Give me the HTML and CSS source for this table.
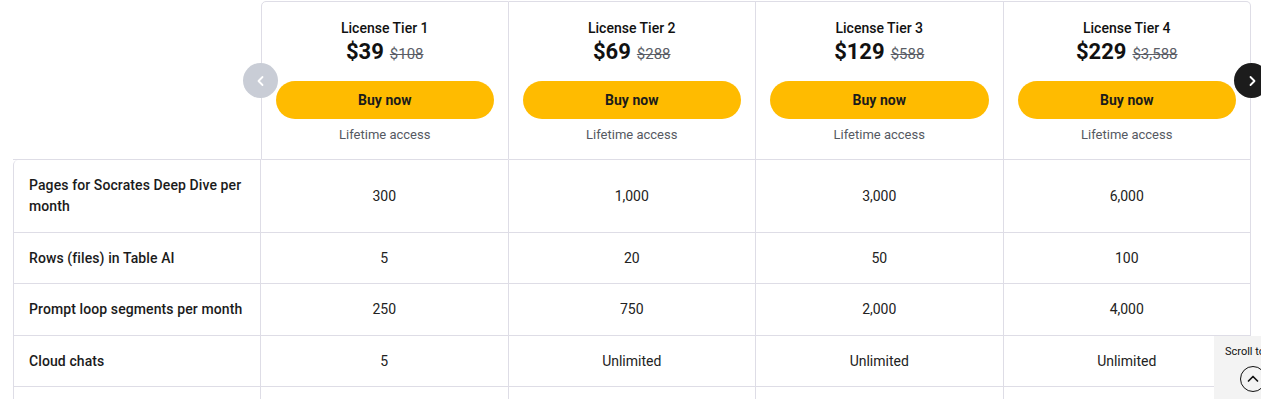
FILE: index.html
```html
<!DOCTYPE html>
<html>
<head>
<meta charset="utf-8">
<link rel="stylesheet" href="styles.css">
</head>
<body>
<div class="wrap">
  <div class="grid">
    <div class="corner"></div>
    <div class="head first-head">
      <div class="tier">License Tier 1</div>
      <div class="price"><span class="now">$39</span><span class="was">$108</span></div>
      <button class="buy">Buy now</button>
      <div class="life">Lifetime access</div>
    </div>
    <div class="head">
      <div class="tier">License Tier 2</div>
      <div class="price"><span class="now">$69</span><span class="was">$288</span></div>
      <button class="buy">Buy now</button>
      <div class="life">Lifetime access</div>
    </div>
    <div class="head">
      <div class="tier">License Tier 3</div>
      <div class="price"><span class="now">$129</span><span class="was">$588</span></div>
      <button class="buy">Buy now</button>
      <div class="life">Lifetime access</div>
    </div>
    <div class="head last-head">
      <div class="tier">License Tier 4</div>
      <div class="price"><span class="now">$229</span><span class="was">$3,588</span></div>
      <button class="buy">Buy now</button>
      <div class="life">Lifetime access</div>
    </div>

    <div class="label first-label">Pages for Socrates Deep Dive per month</div>
    <div class="val">300</div><div class="val">1,000</div><div class="val">3,000</div><div class="val">6,000</div>

    <div class="label">Rows (files) in Table AI</div>
    <div class="val">5</div><div class="val">20</div><div class="val">50</div><div class="val">100</div>

    <div class="label">Prompt loop segments per month</div>
    <div class="val">250</div><div class="val">750</div><div class="val">2,000</div><div class="val">4,000</div>

    <div class="label">Cloud chats</div>
    <div class="val">5</div><div class="val">Unlimited</div><div class="val">Unlimited</div><div class="val">Unlimited</div>

    <div class="label">&nbsp;</div>
    <div class="val">&nbsp;</div><div class="val">&nbsp;</div><div class="val">&nbsp;</div><div class="val">&nbsp;</div>
  </div>
  <button class="nav nav-prev" aria-label="Previous">
    <svg width="14" height="14" viewBox="0 0 14 14"><polyline points="8.5,3 4.5,7 8.5,11" fill="none" stroke="#fff" stroke-width="1.8" stroke-linecap="round" stroke-linejoin="round"/></svg>
  </button>
  <button class="nav nav-next" aria-label="Next">
    <svg width="14" height="14" viewBox="0 0 14 14"><polyline points="5.5,3 9.5,7 5.5,11" fill="none" stroke="#fff" stroke-width="1.8" stroke-linecap="round" stroke-linejoin="round"/></svg>
  </button>
</div>
<div class="scrolltop">
  <span class="st-text">Scroll to top</span>
  <span class="st-circle">
    <svg width="16" height="16" viewBox="0 0 16 16"><polyline points="3.5,10 8,5.5 12.5,10" fill="none" stroke="#111" stroke-width="1.7" stroke-linecap="round" stroke-linejoin="round"/></svg>
  </span>
</div>
</body>
</html>
```
FILE: styles.css
```css
html, body {
  margin: 0;
  padding: 0;
  background: #fff;
  overflow: hidden;
}
body {
  font-family: Roboto, "Liberation Sans", Arial, sans-serif;
  color: #1b1b1b;
  padding-top: 1px;
}
.wrap {
  position: relative;
  margin-left: 13px;
  width: 1238px;
}
.grid {
  display: grid;
  grid-template-columns: 248px repeat(4, 1fr);
}
.corner {
  border-bottom: 1px solid #dedde6;
}
.head {
  display: flex;
  flex-direction: column;
  align-items: center;
  padding: 16px 14px 15px;
  border-top: 1px solid #dedde6;
  border-right: 1px solid #dedde6;
  border-bottom: 1px solid #dedde6;
}
.first-head {
  border-left: 1px solid #dedde6;
  border-top-left-radius: 5px;
}
.last-head {
  border-top-right-radius: 5px;
}
.tier {
  font-size: 14px;
  font-weight: 500;
  line-height: 20px;
  color: #111;
}
.price {
  display: flex;
  align-items: baseline;
  gap: 6px;
  line-height: 28px;
}
.now {
  font-size: 22px;
  font-weight: 700;
  color: #111;
}
.was {
  font-size: 15px;
  color: #5a5d66;
  text-decoration: line-through;
}
.buy {
  margin-top: 13px;
  width: 100%;
  height: 38px;
  border: none;
  border-radius: 19px;
  background: #ffbb00;
  font-family: Roboto, "Liberation Sans", Arial, sans-serif;
  font-size: 14px;
  font-weight: 700;
  color: #1b1b1b;
  cursor: pointer;
}
.life {
  margin-top: 7px;
  font-size: 13px;
  line-height: 18px;
  color: #555962;
}
.label, .val {
  padding: 15px 15px 14.5px;
  font-size: 14px;
  line-height: 21px;
  border-right: 1px solid #dedde6;
  border-bottom: 1px solid #dedde6;
}
.label {
  font-weight: 500;
  letter-spacing: 0.1px;
  color: #1b1b1b;
  border-left: 1px solid #dedde6;
}
.first-label {
  border-top-left-radius: 5px;
}
.val {
  display: flex;
  align-items: center;
  justify-content: center;
  color: #222;
}
.nav {
  position: absolute;
  top: 62px;
  width: 35px;
  height: 35px;
  border-radius: 50%;
  border: none;
  padding: 0;
  display: flex;
  align-items: center;
  justify-content: center;
}
.nav-prev {
  left: 230px;
  background: #c9cdd6;
}
.nav-next {
  left: 1221px;
  background: #1c1c1c;
}
.scrolltop {
  position: fixed;
  left: 1214px;
  top: 336px;
  width: 70px;
  height: 70px;
  background: #f3f3f3;
  display: flex;
  flex-direction: column;
  padding: 9px 0 0 11px;
  box-sizing: border-box;
}
.st-text {
  font-size: 11px;
  line-height: 14px;
  color: #111;
  white-space: nowrap;
}
.st-circle {
  margin-top: 7px;
  margin-left: 15px;
  width: 26px;
  height: 26px;
  border: 1.3px solid #111;
  border-radius: 50%;
  display: flex;
  align-items: center;
  justify-content: center;
  box-sizing: border-box;
}
```
